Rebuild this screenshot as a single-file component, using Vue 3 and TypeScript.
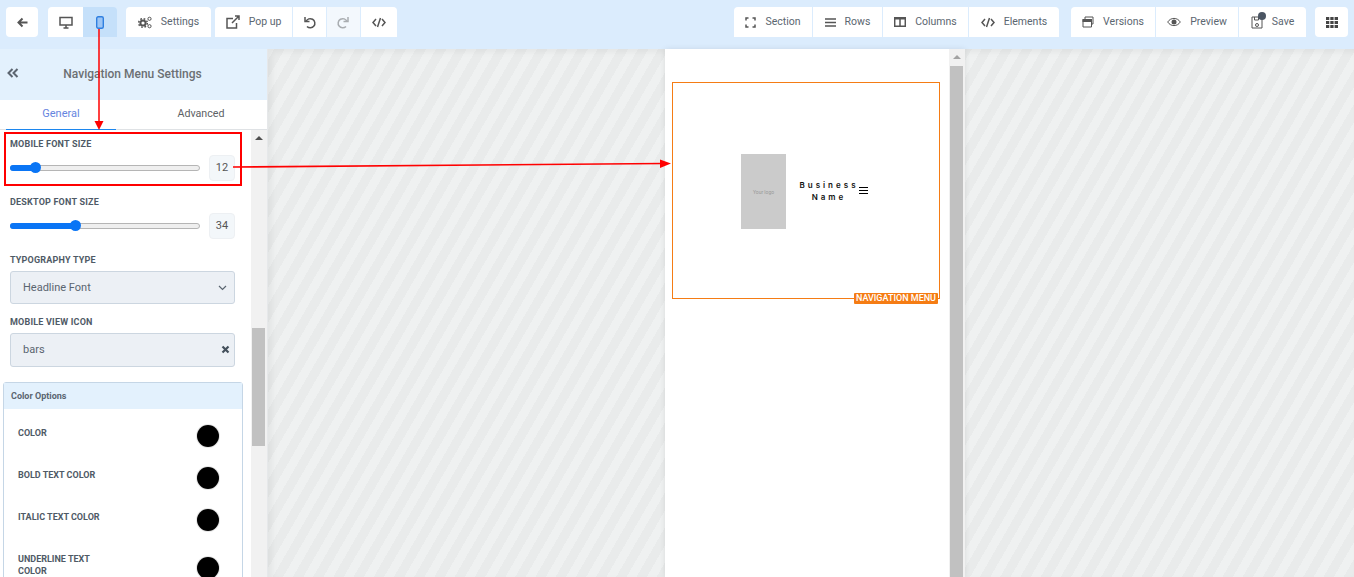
<script setup lang="ts">
const colors = ['COLOR', 'BOLD TEXT COLOR', 'ITALIC TEXT COLOR', 'UNDERLINE TEXT COLOR']
</script>

<template>
  <div class="page">
    <header class="bar">
      <button class="btn solo back">
        <svg width="11" height="11" viewBox="0 0 11 11"><path d="M10.500 5.500H1.500M5.500 1.500l-4 4 4 4" class="s2" /></svg>
      </button>
      <div class="grp g-view">
        <button class="btn w35">
          <svg width="14" height="13" viewBox="0 0 14 13"><path d="M1 1.500h12v7.500H1zM4.500 12h5M7 9v3" class="s15" /></svg>
        </button>
        <button class="btn w34 active">
          <svg width="8" height="13" viewBox="0 0 8 13"><rect x=".7" y=".7" width="6.600" height="11.600" rx="1.500" fill="#9cc5f5" stroke="#2f7fe0" stroke-width="1.400" /></svg>
        </button>
      </div>
      <div class="grp g-set">
        <button class="btn w85 ic">
          <svg width="14" height="13" viewBox="0 0 14 13">
            <circle cx="5" cy="7" r="2.600" class="s2" />
            <circle cx="5" cy="7" r="4.300" fill="none" stroke="#555" stroke-width="1.500" stroke-dasharray="1.700 1.700" />
            <circle cx="11.500" cy="2.800" r="1.600" class="s1" />
            <circle cx="11.500" cy="10.200" r="1.600" class="s1" />
          </svg>
          <span>Settings</span>
        </button>
      </div>
      <div class="grp g-pop">
        <button class="btn w77 ic">
          <svg width="14" height="14" viewBox="0 0 14 14"><path d="M10.500 8v5H1V3.500h6M6 8l7-7M9 1h4v4" class="s15" /></svg>
          <span>Pop up</span>
        </button>
        <button class="btn w33">
          <svg width="13" height="13" viewBox="0 0 13 13"><path d="M3 5.500A4.600 4.600 0 1 1 4 10.500M2 1v4.500h4.500" class="s15" /></svg>
        </button>
        <button class="btn w33 off">
          <svg width="13" height="13" viewBox="0 0 13 13"><path d="M10 5.500A4.600 4.600 0 1 0 9 10.500M11 1v4.500H6.500" class="s15 lite" /></svg>
        </button>
        <button class="btn w36">
          <svg width="14" height="11" viewBox="0 0 14 11"><path d="M4 2 1 5.500 4 9M10 2l3 3.500L10 9M8.500 1l-3 9" class="s15" /></svg>
        </button>
      </div>
      <div class="spacer"></div>
      <div class="grp g-add">
        <button class="btn w78 ic">
          <svg width="11" height="11" viewBox="0 0 11 11"><path d="M1 3.500V1h2.500M7.500 1H10v2.500M10 7.500V10H7.500M3.500 10H1V7.500" class="s15" /></svg>
          <span>Section</span>
        </button>
        <button class="btn w69 ic">
          <svg width="11" height="9" viewBox="0 0 11 9"><path d="M0 1h11M0 4.500h11M0 8h11" class="s15" /></svg>
          <span>Rows</span>
        </button>
        <button class="btn w85 ic">
          <svg width="12" height="10" viewBox="0 0 12 10"><path d="M.7.700h10.600v8.600H.700zM6 1v8" class="s15" /><path d="M0 0h12v2.500H0z" fill="#555" /></svg>
          <span>Columns</span>
        </button>
        <button class="btn w90 ic">
          <svg width="14" height="11" viewBox="0 0 14 11"><path d="M4 2 1 5.500 4 9M10 2l3 3.500L10 9M8.500 1l-3 9" class="s15" /></svg>
          <span>Elements</span>
        </button>
      </div>
      <div class="grp g-save">
        <button class="btn w84 ic">
          <svg width="12" height="12" viewBox="0 0 12 12"><path d="M3 3V1h8v7H9.500" class="s1" /><path d="M1 3.500h8.500V11H1z" class="s1" /><path d="M.5 3h9.500v3H.5z" fill="#555" /></svg>
          <span>Versions</span>
        </button>
        <button class="btn w82 ic">
          <svg width="14" height="10" viewBox="0 0 14 10"><path d="M.7 5C3.700.2 10.300.2 13.300 5 10.300 9.800 3.700 9.800.7 5z" class="s1" /><circle cx="7" cy="5" r="2.500" fill="#555" /></svg>
          <span>Preview</span>
        </button>
        <button class="btn w68 ic">
          <span class="saveic">
            <svg width="12" height="13" viewBox="0 0 12 13"><path d="M1 1h8l2 2v9H1zM3.500 1v3h4V1M4.500 9a1.500 1.500 0 1 0 3 0 1.500 1.500 0 1 0-3 0" class="s1" /></svg>
            <i class="dot"></i>
          </span>
          <span>Save</span>
        </button>
      </div>
      <button class="btn solo apps">
        <svg width="12" height="11" viewBox="0 0 12 11"><path d="M0 0h3.300v3H0zM4.300 0h3.300v3H4.300zM8.600 0H12v3H8.600zM0 4h3.300v3H0zM4.300 4h3.300v3H4.300zM8.600 4H12v3H8.600zM0 8h3.300v3H0zM4.300 8h3.300v3H4.300zM8.600 8H12v3H8.600z" fill="#444" /></svg>
      </button>
    </header>

    <div class="main">
      <aside class="side">
        <div class="side-head">
          <svg class="chev" width="12" height="10" viewBox="0 0 12 10"><path d="M5.500 1 1.500 5l4 4M10.500 1l-4 4 4 4" class="s2" /></svg>
          <span class="title">Navigation Menu Settings</span>
        </div>
        <div class="tabs">
          <div class="tab on">General</div>
          <div class="tab">Advanced</div>
        </div>
        <div class="side-body">
          <div class="form">
            <label class="lbl">MOBILE FONT SIZE</label>
            <div class="range">
              <div class="track"><div class="fill f12"></div><div class="knob k12"></div></div>
              <div class="val">12</div>
            </div>
            <label class="lbl">DESKTOP FONT SIZE</label>
            <div class="range">
              <div class="track"><div class="fill f34"></div><div class="knob k34"></div></div>
              <div class="val">34</div>
            </div>
            <label class="lbl">TYPOGRAPHY TYPE</label>
            <div class="select">
              <span>Headline Font</span>
              <svg width="9" height="6" viewBox="0 0 9 6"><path d="M1 1l3.500 3.500L8 1" class="chevd" /></svg>
            </div>
            <label class="lbl">MOBILE VIEW ICON</label>
            <div class="select tall">
              <span>bars</span>
              <svg width="9" height="9" viewBox="0 0 9 9"><path d="M1.500 1.500l6 6M7.500 1.500l-6 6" class="x" /></svg>
            </div>
            <section class="card">
              <div class="card-head">Color Options</div>
              <div class="card-body">
                <div v-for="c in colors" :key="c" class="crow">
                  <span class="cname">{{ c }}</span>
                  <i class="swatch"></i>
                </div>
              </div>
            </section>
          </div>
          <div class="sb">
            <div class="sb-up"></div>
            <div class="sb-thumb"></div>
          </div>
        </div>
      </aside>

      <div class="canvas">
        <div class="phone">
          <div class="phone-in">
            <div class="nav">
              <div class="logo"><span>Your logo</span></div>
              <div class="biz">Business<br />Name</div>
              <svg class="burger" width="9" height="7" viewBox="0 0 9 7"><path d="M0 .5h9M0 3.500h9M0 6.500h9" stroke="#000" stroke-width="1" fill="none" /></svg>
              <span class="tag">NAVIGATION MENU</span>
            </div>
          </div>
          <div class="psb">
            <div class="sb-up"></div>
            <div class="psb-thumb"></div>
          </div>
        </div>
      </div>
    </div>

    <svg class="notes" width="1354" height="577" viewBox="0 0 1354 577">
      <path d="M99 29V123" stroke="#f00" stroke-width="1.500" fill="none" />
      <path d="M94.500 121h9L99 130z" fill="#f00" />
      <rect x="5" y="133" width="236" height="52" fill="none" stroke="#f00" stroke-width="2" />
      <path d="M233 167 664 163.500" stroke="#f00" stroke-width="1.700" fill="none" />
      <path d="M660 159.500 671 163.500 660 168z" fill="#f00" />
    </svg>
  </div>
</template>

<style>
html, body { margin: 0; overflow: hidden; }
</style>

<style scoped>
.page { position: relative; width: 1354px; height: 577px; overflow: hidden; font-family: Roboto, "Liberation Sans", sans-serif; color: #555; background: #fff; }
.bar { height: 49px; box-sizing: border-box; padding: 7px 6px 0; display: flex; background: #dbecfd; }
.spacer { flex: 1; }
.btn { height: 30px; padding: 0; border: 0; background: #fff; display: flex; align-items: center; justify-content: center; font: 400 10.500px Roboto, sans-serif; color: #5b6670; }
.btn span:not(.saveic) { position: relative; top: -.5px; }
.ic { gap: 9px; }
.solo { border-radius: 4px; }
.back { width: 32px; margin-right: 10px; }
.apps { width: 33px; margin-left: 9px; }
.grp { display: flex; gap: 1px; border-radius: 4px; overflow: hidden; }
.g-view { gap: 0; margin-right: 9px; }
.g-set { margin-right: 4px; }
.g-add { margin-right: 12px; }
.w33 { width: 33px; }
.w34 { width: 34px; }
.w35 { width: 35px; }
.w36 { width: 36px; }
.w68 { width: 67px; }
.w69 { width: 69px; }
.w77 { width: 77px; }
.w78 { width: 78px; }
.w82 { width: 82px; }
.w84 { width: 84px; }
.w85 { width: 85px; }
.w90 { width: 90px; }
.active { background: #c5e0fa; }
.off { background: #f3f8fd; }
.s1, .s15, .s2 { stroke: #555; fill: none; }
.s1 { stroke-width: 1; }
.s15 { stroke-width: 1.500; }
.s2 { stroke-width: 2; }
.lite { stroke: #a9adb1; }
.chevd { stroke: #5a6570; stroke-width: 1.200; fill: none; }
.x { stroke: #44505c; stroke-width: 2.200; fill: none; }
.saveic { position: relative; display: flex; }
.dot { position: absolute; top: -4px; right: -3px; width: 8px; height: 8px; border-radius: 50%; background: #4b5563; }

.main { display: flex; height: 528px; }
.side { width: 267px; flex: none; display: flex; flex-direction: column; background: #fff; border-right: 1px solid #e6e8ea; }
.side-head { position: relative; height: 51px; box-sizing: border-box; padding-bottom: 2px; flex: none; display: flex; align-items: center; justify-content: center; background: #e3f1fd; }
.chev { position: absolute; left: 7px; top: 19px; }
.chev path { stroke: #5c6570; }
.title { font-size: 12px; font-weight: 500; color: #6b6f73; position: relative; left: -1px; }
.tabs { display: flex; height: 30px; flex: none; box-sizing: border-box; border-bottom: 1px solid #dfe2e5; }
.tab { flex: none; text-align: center; font-size: 11px; line-height: 28px; color: #5d6165; }
.tab.on { width: 110px; margin-left: 6px; color: #6685e0; border-bottom: 1px solid #1c86ee; height: 29px; }
.tab:not(.on) { margin-left: 19px; width: 132px; font-size: 10.700px; }
.side-body { flex: 1; min-height: 0; display: flex; }
.form { width: 251px; flex: none; box-sizing: border-box; padding: 8px 16px 0 10px; overflow: hidden; }
.lbl { display: block; font-size: 9px; line-height: 12px; font-weight: 700; letter-spacing: .2px; color: #4f5a66; }
.range { display: flex; align-items: center; justify-content: space-between; height: 26px; margin: 5px 0 15px; }
.track { position: relative; width: 190px; height: 6px; box-sizing: border-box; border: 1px solid #b5b5b5; border-radius: 3px; background: #efefef; }
.fill { position: absolute; left: -1px; top: -1px; height: 6px; border-radius: 3px; background: #0a75f5; }
.f12 { width: 26px; }
.f34 { width: 66px; }
.knob { position: absolute; top: -4px; width: 11px; height: 11px; border-radius: 50%; background: #0a75f5; }
.k12 { left: 19px; }
.k34 { left: 59px; }
.val { width: 26px; height: 26px; box-sizing: border-box; border: 1px solid #edf0f3; border-radius: 4px; background: #f3f7fa; font-size: 11px; line-height: 24px; text-align: center; color: #555; }
.select { height: 33px; margin: 5px 0 12px; box-sizing: border-box; width: 225px; border: 1px solid #ccd6e0; border-radius: 3px; background: #ecf0f5; display: flex; align-items: center; justify-content: space-between; padding: 0 7px 0 12px; font-size: 11px; color: #5a6570; }
.tall { height: 34px; margin-bottom: 15px; padding: 0 4px 2px 12px; }
.card { width: 240px; margin-left: -7px; box-sizing: border-box; border: 1px solid #c5d6e6; border-radius: 3px; background: #fff; }
.card-head { height: 26px; padding-left: 7px; background: #e3f1fd; font-size: 9px; line-height: 26px; font-weight: 700; color: #5a6570; }
.card-body { padding-top: 5px; }
.crow { display: flex; align-items: center; justify-content: space-between; padding: 13px 23px 17px 14px; position: relative; }
.cname { width: 90px; font-size: 9px; line-height: 12px; font-weight: 700; color: #4f5a66; align-self: flex-start; }
.swatch { width: 22px; height: 22px; margin: -2px 0 -8px; border-radius: 50%; background: #000; box-shadow: 0 0 0 1px #e6e6e6; }
.sb { width: 16px; flex: none; background: #f1f1f1; position: relative; }
.sb-up { width: 0; height: 0; margin: 6px auto 0; border: 4px solid transparent; border-top: 0; border-bottom: 4px solid #505050; }
.sb-thumb { position: absolute; top: 198px; left: 1px; width: 13px; height: 118px; background: #c1c1c1; }

.canvas { flex: 1; display: flex; justify-content: center; box-shadow: inset 4px 3px 6px rgba(0, 0, 0, .05); background: repeating-linear-gradient(-60deg, #e9ebeb 0 9px, #eff1f1 9px 17.500px); }
.phone { width: 300px; position: relative; left: 4px; display: flex; background: #fff; box-shadow: 0 0 6px rgba(0, 0, 0, .09); }
.phone-in { flex: 1; padding: 33px 9px 0 7px; }
.nav { position: relative; height: 217px; box-sizing: border-box; border: 1px solid #f57c14; display: flex; align-items: center; padding-left: 68px; }
.logo { width: 45px; height: 75px; background: #cbcbcb; display: flex; align-items: center; justify-content: center; position: relative; top: 1px; }
.logo span { font-size: 5px; color: #999; white-space: nowrap; }
.biz { width: 60px; margin-left: 13px; text-align: center; font: 600 8px/12px Inter, "Open Sans", sans-serif; letter-spacing: 3px; color: #111; }
.burger { margin-left: 0; }
.tag { position: absolute; right: 1px; bottom: -6px; height: 11px; padding: 0 2px; background: #f57c14; border-radius: 1px; color: #fff; font-size: 9px; line-height: 11px; font-weight: 500; white-space: nowrap; }
.psb { width: 16px; flex: none; background: #f1f1f1; }
.psb .sb-up { margin-top: 6px; border-bottom-color: #a3a3a3; }
.psb-thumb { width: 13px; margin: 7px 0 0 1px; height: 520px; background: #c1c1c1; }
.notes { position: absolute; left: 0; top: 0; pointer-events: none; }
</style>
